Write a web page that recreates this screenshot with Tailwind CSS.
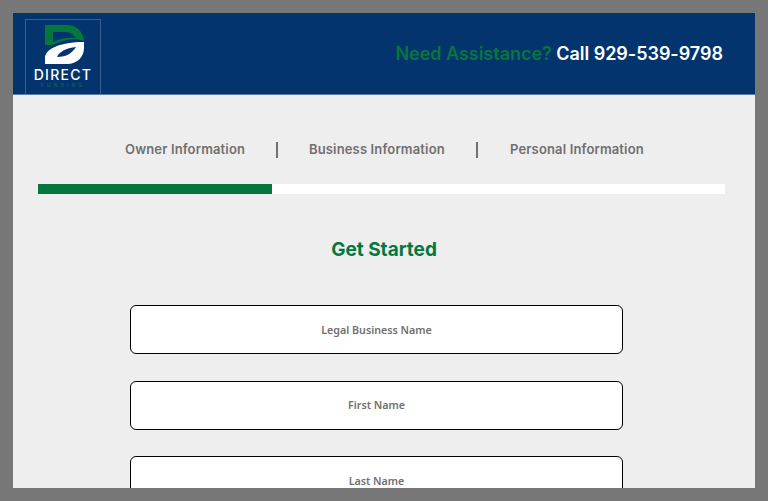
<!DOCTYPE html>
<html lang="en">
<head>
  <meta charset="UTF-8">
  <meta name="viewport" content="width=device-width, initial-scale=1.0">
  <title>Direct Funding - Get Started</title>
  <script src="https://cdn.jsdelivr.net/npm/@tailwindcss/browser@4"></script>
</head>
<body class="h-[501px] overflow-hidden bg-[#777777] pt-[13px] pl-[13px] font-['Inter',sans-serif]">
  <div class="h-[475px] w-[742px] overflow-hidden bg-[#eeeeee]">
    <!-- Header -->
    <header class="flex h-[82px] items-end justify-between border-b border-[#5b7ea8] bg-[#03346e] pl-3 pr-8">
      <div class="flex h-[75px] w-[76px] flex-col items-center border border-b-0 border-[#3a5f8f]">
        <svg viewBox="0 0 74 40" class="mt-[5px] h-[40px] w-[74px] shrink-0">
          <path fill="#04773f" fill-rule="evenodd" d="M19 0H41C50 0 57 6 58 16C50 13 38 14 27 20H19ZM27 7V17C35 13 42 12 50 13C47 9 44 7 39 7Z"/>
          <path fill="#ffffff" fill-rule="evenodd" d="M58 17V23C58 32 51 39 41 39H19V33C19 24 34 17 58 17ZM50 22C40 23 33 27 31 32C41 32 46 28 50 22Z"/>
        </svg>
        <div class="mt-[2px] text-[14px] leading-[15px] font-medium tracking-[1.3px] text-white">DIRECT</div>
        <div class="text-[5px] leading-[7px] tracking-[3px] text-[#04773f]">FUNDING</div>
      </div>
      <p class="mb-[29px] text-[18px] leading-[22px] font-semibold tracking-[-0.03px] text-white"><span class="text-[#04773f]">Need Assistance?</span> Call 929-539-9798</p>
    </header>

    <!-- Steps -->
    <nav class="mt-[46px] flex h-[18px] items-center pl-[112px] text-[13px] font-semibold tracking-[0.15px] text-[#707070]">
      <span class="w-[119px] whitespace-nowrap">Owner Information</span>
      <span class="mr-[31px] ml-8 h-4 w-0.5 bg-[#707070]"></span>
      <span class="w-[136px] whitespace-nowrap">Business Information</span>
      <span class="mr-8 ml-[31px] h-4 w-0.5 bg-[#707070]"></span>
      <span class="whitespace-nowrap">Personal Information</span>
    </nav>

    <div class="mx-[25px] mt-[25px] h-[10px] w-[687px] bg-white">
      <div class="h-full w-[234px] bg-[#04773f]"></div>
    </div>

    <h1 class="mt-[43px] text-center text-[19px] leading-[26px] font-bold text-[#04773f]">Get Started</h1>

    <!-- Form -->
    <form class="mt-[42px] ml-[117px] flex w-[493px] flex-col gap-[26.5px] font-['Noto_Sans',sans-serif] text-[10.7px] font-semibold text-[#707070]">
      <div class="flex h-[49px] shrink-0 items-center justify-center rounded-md border border-black bg-white pt-px">Legal Business Name</div>
      <div class="flex h-[49px] shrink-0 items-center justify-center rounded-md border border-black bg-white pt-px">First Name</div>
      <div class="flex h-[49px] shrink-0 items-center justify-center rounded-md border border-black bg-white pt-px">Last Name</div>
    </form>
  </div>
</body>
</html>
